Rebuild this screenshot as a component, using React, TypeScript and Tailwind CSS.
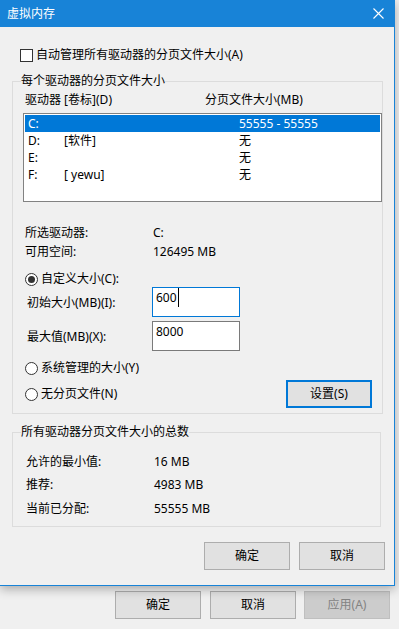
import React from "react";

function Radio({ checked }: { checked?: boolean }) {
  return (
    <div className="w-[13px] h-[13px] rounded-full border border-[#333333] bg-white flex items-center justify-center shrink-0">
      {checked ? <div className="w-[7px] h-[7px] rounded-full bg-[#333333]" /> : null}
    </div>
  );
}

function Btn({ label, primary, disabled }: { label: string; primary?: boolean; disabled?: boolean }) {
  if (disabled) {
    return (
      <div className="w-[86px] h-[28px] border border-[#bfbfbf] bg-[#cccccc] flex items-center justify-center text-[#838383]">
        {label}
      </div>
    );
  }
  return (
    <div
      className={
        primary
          ? "w-[86px] h-[28px] border-2 border-[#0078d7] bg-[#e1e1e1] flex items-center justify-center text-black"
          : "w-[86px] h-[28px] border border-[#adadad] bg-[#e1e1e1] flex items-center justify-center text-black"
      }
    >
      {label}
    </div>
  );
}

export default function App() {
  const rows = [
    { d: "C:", v: "", s: "55555 - 55555", sel: true },
    { d: "D:", v: "[软件]", s: "无" },
    { d: "E:", v: "", s: "无" },
    { d: "F:", v: "[ yewu]", s: "无" },
  ];
  return (
    <div className="w-[399px] h-[629px] bg-[#f0f0f0] overflow-hidden flex flex-col text-[12px] leading-[16px] text-black font-['Noto_Sans','Noto_Sans_CJK_SC',sans-serif]">
      <div className="relative z-10 w-[395px] h-[586px] shrink-0 bg-[#f0f0f0] border-r border-b border-[#1883d7] shadow-[0_3px_10px_rgba(0,0,0,0.3)] flex flex-col">
        {/* title bar */}
        <div className="h-[27px] shrink-0 bg-[#1883d7] flex items-center justify-between pl-[7px] pr-[10px] text-white">
          <span>虚拟内存</span>
          <svg width="11" height="11" viewBox="0 0 11 11">
            <path d="M0.5 0.5 L10.5 10.5 M10.5 0.5 L0.5 10.5" stroke="#ffffff" strokeWidth="1.1" />
          </svg>
        </div>

        {/* auto checkbox */}
        <div className="mt-[20px] h-[16px] flex items-center pl-[20px]">
          <div className="w-[13px] h-[13px] border border-[#333333] bg-white shrink-0" />
          <span className="ml-[3px]">自动管理所有驱动器的分页文件大小(A)</span>
        </div>

        {/* group 1 */}
        <fieldset className="mt-[10px] ml-[12px] w-[369px] border border-[#dcdcdc] pl-[8px] pb-[5px]">
          <legend className="leading-[16px]">每个驱动器的分页文件大小</legend>
          <div className="mt-[3px] h-[16px] flex pl-[4px]">
            <span className="w-[180px]">驱动器 [卷标](D)</span>
            <span>分页文件大小(MB)</span>
          </div>
          <div className="mt-[5px] ml-[2px] w-[359px] h-[89px] border border-[#828282] bg-white p-[1px]">
            {rows.map((r) => (
              <div
                key={r.d}
                className={
                  r.sel
                    ? "h-[17px] flex items-center pl-[3px] bg-[#0078d7] text-white"
                    : "h-[17px] flex items-center pl-[3px]"
                }
              >
                <span className="w-[36px]">{r.d}</span>
                <span className="w-[175px]">{r.v}</span>
                <span>{r.s}</span>
              </div>
            ))}
          </div>

          <div className="mt-[23px] h-[16px] flex pl-[4px]">
            <span className="w-[128px]">所选驱动器:</span>
            <span>C:</span>
          </div>
          <div className="mt-[3px] h-[16px] flex pl-[4px]">
            <span className="w-[128px]">可用空间:</span>
            <span>126495 MB</span>
          </div>

          <div className="mt-[11px] h-[16px] flex items-center pl-[4px]">
            <Radio checked />
            <span className="ml-[3px]">自定义大小(C):</span>
          </div>

          <div className="h-[30px] flex items-center pl-[6px]">
            <span className="w-[125px] pt-[2px]">初始大小(MB)(I):</span>
            <div className="w-[88px] h-[30px] border border-[#0078d7] bg-white pl-[3px] pt-[2px] flex items-start">
              <span>600</span>
              <span className="inline-block w-px h-[19px] bg-black ml-[1px] -mt-[2px]" />
            </div>
          </div>

          <div className="mt-[4px] h-[30px] flex items-center pl-[6px]">
            <span className="w-[125px] pt-[2px]">最大值(MB)(X):</span>
            <div className="w-[88px] h-[30px] border border-[#7a7a7a] bg-white pl-[3px] pt-[2px]">
              <span>8000</span>
            </div>
          </div>

          <div className="mt-[9px] h-[16px] flex items-center pl-[4px]">
            <Radio />
            <span className="ml-[3px]">系统管理的大小(Y)</span>
          </div>

          <div className="mt-[4px] h-[28px] flex items-center pl-[4px]">
            <Radio />
            <span className="ml-[3px]">无分页文件(N)</span>
            <div className="ml-auto mr-[10px]">
              <Btn label="设置(S)" primary />
            </div>
          </div>
        </fieldset>

        {/* group 2 */}
        <fieldset className="mt-[10px] ml-[12px] w-[369px] border border-[#dcdcdc] pl-[8px] pb-[9px]">
          <legend className="leading-[16px]">所有驱动器分页文件大小的总数</legend>
          <div className="mt-[14px] h-[16px] flex pl-[5px]">
            <span className="w-[128px]">允许的最小值:</span>
            <span>16 MB</span>
          </div>
          <div className="mt-[7px] h-[16px] flex pl-[5px]">
            <span className="w-[128px]">推荐:</span>
            <span>4983 MB</span>
          </div>
          <div className="mt-[8px] h-[16px] flex pl-[5px]">
            <span className="w-[128px]">当前已分配:</span>
            <span>55555 MB</span>
          </div>
        </fieldset>

        <div className="mt-[15px] flex justify-end gap-[9px] pr-[9px]">
          <Btn label="确定" />
          <Btn label="取消" />
        </div>
      </div>

      {/* parent window strip */}
      <div className="flex pt-[5px] pl-[115px]">
        <Btn label="确定" />
        <div className="ml-[9px]">
          <Btn label="取消" />
        </div>
        <div className="ml-[8px]">
          <Btn label="应用(A)" disabled />
        </div>
      </div>
    </div>
  );
}
